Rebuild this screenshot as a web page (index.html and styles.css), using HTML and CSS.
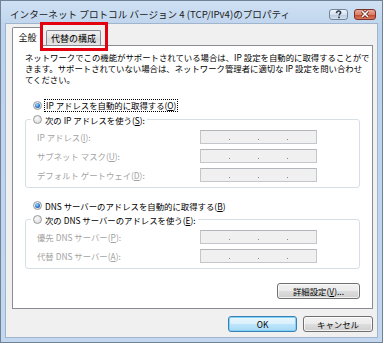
FILE: index.html
```html
<!DOCTYPE html>
<html lang="ja">
<head>
    <meta charset="UTF-8">
    <title>インターネット プロトコル バージョン 4 (TCP/IPv4)のプロパティ</title>
    <link rel="stylesheet" href="styles.css">
</head>
<body>
    <div class="window">
        <div class="titlebar">
            <div class="caption">インターネット プロトコル バージョン 4 (TCP/IPv4)のプロパティ</div>
            <div class="cap-buttons">
                <div class="cap-btn help">
                    <svg width="9" height="9" viewBox="0 0 9 9"><path d="M2.5 3.2 C2.5 1.6 3.5 1 4.6 1 C5.8 1 6.6 1.7 6.6 2.7 C6.6 3.8 5.2 4.2 5 5.4" fill="none" stroke="#2d3d52" stroke-width="1.6"/><rect x="4.1" y="6.6" width="1.7" height="1.6" fill="#2d3d52"/></svg>
                </div>
                <div class="cap-btn close">
                    <svg width="10" height="8" viewBox="0 0 10 8"><path d="M2 1 L8 7 M8 1 L2 7" stroke="#5b1a10" stroke-width="3"/><path d="M2 1 L8 7 M8 1 L2 7" stroke="#fff" stroke-width="1.6"/></svg>
                </div>
            </div>
        </div>
        <div class="client">
            <div class="tabs">
                <div class="tab active">全般</div>
                <div class="marked">
                    <div class="tab">代替の構成</div>
                </div>
            </div>
            <div class="panel">
                <p class="desc">
                    <span>ネットワークでこの機能がサポートされている場合は、IP 設定を自動的に取得することがで</span>
                    <span>きます。サポートされていない場合は、ネットワーク管理者に適切な IP 設定を問い合わせ</span>
                    <span>てください。</span>
                </p>
                <div class="option">
                    <span class="radio checked"></span>
                    <span class="focus">IP アドレスを自動的に取得する(<u>O</u>)</span>
                </div>
                <fieldset class="group">
                    <legend class="option">
                        <span class="radio"></span>
                        <span>次の IP アドレスを使う(<u>S</u>):</span>
                    </legend>
                    <div class="fields">
                        <label>IP アドレス(<u>I</u>):</label>
                        <div class="ipbox"><i></i><i></i><i></i></div>
                        <label>サブネット マスク(<u>U</u>):</label>
                        <div class="ipbox"><i></i><i></i><i></i></div>
                        <label>デフォルト ゲートウェイ(<u>D</u>):</label>
                        <div class="ipbox"><i></i><i></i><i></i></div>
                    </div>
                </fieldset>
                <div class="option dns-auto">
                    <span class="radio checked"></span>
                    <span>DNS サーバーのアドレスを自動的に取得する(<u>B</u>)</span>
                </div>
                <fieldset class="group">
                    <legend class="option">
                        <span class="radio"></span>
                        <span>次の DNS サーバーのアドレスを使う(<u>E</u>):</span>
                    </legend>
                    <div class="fields">
                        <label>優先 DNS サーバー(<u>P</u>):</label>
                        <div class="ipbox"><i></i><i></i><i></i></div>
                        <label>代替 DNS サーバー(<u>A</u>):</label>
                        <div class="ipbox"><i></i><i></i><i></i></div>
                    </div>
                </fieldset>
                <div class="panel-actions">
                    <button class="btn detail">詳細設定(<u>V</u>)...</button>
                </div>
            </div>
            <div class="footer">
                <button class="btn default">OK</button>
                <button class="btn">キャンセル</button>
            </div>
        </div>
    </div>
</body>
</html>
```

FILE: styles.css
```css
* {
    box-sizing: border-box;
}
body {
    margin: 0;
    background: #fff;
    font-family: 'Noto Sans CJK JP', 'Noto Sans', sans-serif;
    font-size: 8.4px;
    color: #000;
}
.window {
    width: 383px;
    height: 343px;
    border: 1px solid #6f8296;
    background: linear-gradient(#cfe0f3, #bcd3ec 30px, #c3d8ef);
    display: flex;
    flex-direction: column;
}
.titlebar {
    height: 23px;
    display: flex;
    align-items: center;
    padding: 0 6px 0 9px;
}
.caption {
    flex: 1;
    font-size: 9.6px;
    color: #1b1b1b;
    white-space: nowrap;
    padding-top: 2px;
}
.cap-buttons {
    display: flex;
    gap: 6px;
    padding-top: 3px;
}
.cap-btn {
    height: 11px;
    border-radius: 3px;
    display: flex;
    align-items: center;
    justify-content: center;
}
.help {
    width: 19px;
    border: 1px solid #74859a;
    background: linear-gradient(#f0f5fb, #d6e2ef 50%, #b9cadd 51%, #d3e0ee);
}
.close {
    width: 22px;
    border: 1px solid #7b3327;
    background: linear-gradient(#eaa899, #d9806b 50%, #c4452b 51%, #d8785f);
}
.client {
    flex: 1;
    margin: 0 5px 5px;
    background: #f0f0f0;
    box-shadow: 0 0 0 1px #9fb5ce;
    padding: 3px 4px 0 6px;
    display: flex;
    flex-direction: column;
}
.tabs {
    display: flex;
    align-items: flex-end;
    height: 18px;
    position: relative;
    z-index: 2;
}
.tab {
    height: 15px;
    padding: 0 4px;
    border: 1px solid #898c95;
    border-bottom: none;
    border-radius: 2px 2px 0 0;
    background: linear-gradient(#f2f2f2, #e3e3e3 50%, #d9d9d9 51%, #e6e6e6);
    display: flex;
    align-items: center;
    white-space: nowrap;
    font-size: 9px;
}
.tab.active {
    height: 19px;
    margin-bottom: -1px;
    width: 31px;
    justify-content: center;
    background: #fff;
}
.marked {
    position: relative;
    margin-left: 3px;
}
.marked::after {
    content: '';
    position: absolute;
    left: -6px;
    right: -7px;
    top: -8px;
    bottom: -6px;
    border: 3px solid #e3000f;
}
.panel {
    background: #fff;
    border: 1px solid #898c95;
    padding: 0 0 9px;
    display: flex;
    flex-direction: column;
}
.desc {
    margin: 6px 0 0 12px;
    line-height: 11px;
    display: flex;
    flex-direction: column;
    white-space: nowrap;
}
.option {
    display: flex;
    align-items: center;
    height: 13px;
    gap: 3px;
    white-space: nowrap;
}
.panel > .option {
    margin: 14px 0 0 20px;
}
.panel > .dns-auto {
    margin-top: 11px;
}
.focus {
    outline: 1px dotted #000;
    line-height: 11px;
    padding: 0 1px;
}
.radio {
    width: 9px;
    height: 9px;
    border-radius: 50%;
    border: 1px solid #9a9a9a;
    background: radial-gradient(circle at 40% 35%, #fafafa, #d6d6d6);
    display: flex;
    align-items: center;
    justify-content: center;
}
.radio.checked::after {
    content: '';
    width: 5px;
    height: 5px;
    border-radius: 50%;
    background: radial-gradient(circle at 40% 35%, #9fe0ff, #2a78d0 55%, #0d3f8a);
}
.group {
    margin: 1px 12px 0;
    padding: 4px 10px 5px 11px;
    border: 1px solid #d5dfe5;
    border-radius: 3px;
    min-width: 0;
}
.group legend {
    padding: 0 2px;
    margin-left: -6px;
}
.fields {
    display: grid;
    grid-template-columns: 163px 117px;
    row-gap: 5px;
    align-items: center;
}
.fields label {
    color: #a3a3a3;
    white-space: nowrap;
    line-height: 14px;
}
.ipbox {
    height: 14px;
    border: 1px solid #c3c6cb;
    border-top-color: #b2b5ba;
    background: #f0f0f0;
    display: flex;
    justify-content: space-evenly;
    align-items: flex-end;
    padding-bottom: 3px;
}
.ipbox i {
    width: 1px;
    height: 1px;
    background: #888;
}
.panel-actions {
    display: flex;
    justify-content: flex-end;
    margin: 14px 12px 0 0;
}
.btn {
    font-family: inherit;
    font-size: 8.4px;
    color: #000;
    height: 16px;
    padding: 0;
    border: 1px solid #707070;
    border-radius: 3px;
    background: linear-gradient(#f2f2f2, #ebebeb 50%, #dddddd 51%, #cfcfcf);
    box-shadow: inset 0 0 0 1px rgba(255, 255, 255, 0.7);
    display: flex;
    align-items: center;
    justify-content: center;
    line-height: 1;
}
.detail {
    width: 83px;
}
.footer {
    display: flex;
    justify-content: flex-end;
    gap: 6px;
    margin-top: 7px;
}
.footer .btn {
    width: 70px;
}
.btn.default {
    width: 69px;
    border-color: #3c7fb1;
    background: linear-gradient(#eaf6fd, #d9f0fc 50%, #bee6fd 51%, #a7d9f5);
    box-shadow: inset 0 0 0 1px #7fd3f8;
}
```
